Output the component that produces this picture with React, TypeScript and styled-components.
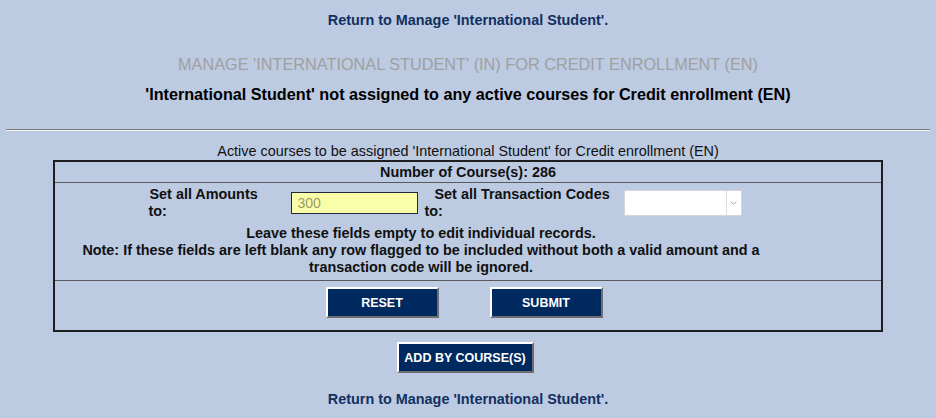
import React from 'react';
import styled, { createGlobalStyle } from 'styled-components';

const GlobalStyle = createGlobalStyle`
  body {
    margin: 0;
    background-color: #bccae2;
    font-family: "Liberation Sans", Arial, sans-serif;
  }
`;

const App: React.FC = () => {
  return (
    <>
      <GlobalStyle />
      <Page>
        <ReturnLink href="#">Return to Manage 'International Student'.</ReturnLink>
        <Title>MANAGE 'INTERNATIONAL STUDENT' (IN) FOR CREDIT ENROLLMENT (EN)</Title>
        <Message>'International Student' not assigned to any active courses for Credit enrollment (EN)</Message>
        <Divider />
        <Caption>Active courses to be assigned 'International Student' for Credit enrollment (EN)</Caption>
        <Panel>
          <CountRow>Number of Course(s): 286</CountRow>
          <SettingsRow>
            <FieldGrid>
              <FieldLabel width={112} indent={1}>Set all Amounts to:</FieldLabel>
              <AmountInput defaultValue="300" />
              <FieldLabel width={190} indent={10}>Set all Transaction Codes to:</FieldLabel>
              <SelectBox>
                <CodeSelect defaultValue="">
                  <option value=""></option>
                </CodeSelect>
                <SelectArrow>
                  <svg width="7" height="4" viewBox="0 0 7 4">
                    <path d="M0.5 0.5 L3.5 3.2 L6.5 0.5" fill="none" stroke="#a8a8a8" strokeWidth="1" />
                  </svg>
                </SelectArrow>
              </SelectBox>
            </FieldGrid>
            <Notes>
              Leave these fields empty to edit individual records.
              <br />
              Note: If these fields are left blank any row flagged to be included without both a valid amount and a
              <br />
              transaction code will be ignored.
            </Notes>
          </SettingsRow>
          <ActionRow>
            <NavyButton type="reset" width={113}>RESET</NavyButton>
            <NavyButton type="submit" width={113}>SUBMIT</NavyButton>
          </ActionRow>
        </Panel>
        <BottomActions>
          <NavyButton type="button" width={137}>ADD BY COURSE(S)</NavyButton>
        </BottomActions>
        <ReturnLink href="#" style={{ marginTop: 18 }}>Return to Manage 'International Student'.</ReturnLink>
      </Page>
    </>
  );
};

// Styled components
const Page = styled.div`
  padding: 12px 6px 0;
  display: flex;
  flex-direction: column;
  text-align: center;
`;

const ReturnLink = styled.a`
  display: block;
  align-self: center;
  font-size: 14.4px;
  font-weight: bold;
  line-height: 16px;
  color: #12305f;
  text-decoration: none;
`;

const Title = styled.h2`
  margin: 26px 0 0;
  font-size: 16.3px;
  font-weight: normal;
  line-height: 20px;
  color: #a0a0a0;
`;

const Message = styled.h3`
  margin: 11px 0 0;
  font-size: 16.2px;
  font-weight: bold;
  line-height: 18px;
  color: #000;
`;

const Divider = styled.hr`
  margin: 26px 0 0;
  height: 0;
  border: 0;
  border-top: 1px solid #7b7b7b;
  border-bottom: 1px solid #f4f4f4;
`;

const Caption = styled.div`
  margin-top: 12px;
  font-size: 14.4px;
  line-height: 17px;
  color: #111;
`;

const Panel = styled.div`
  box-sizing: border-box;
  width: 830px;
  margin: 0 auto;
  border: 2px solid #1e1e1e;
  color: #111;
  font-size: 14.4px;
  font-weight: bold;
`;

const CountRow = styled.div`
  height: 20px;
  line-height: 20px;
  border-bottom: 1px solid #5a5a5a;
`;

const SettingsRow = styled.div`
  padding: 3px 0 4px;
  border-bottom: 1px solid #5a5a5a;
`;

const FieldGrid = styled.div`
  display: grid;
  grid-template-columns: 142px 134px 199px 158px;
  justify-content: center;
  align-items: center;
  padding-right: 6px;
  text-align: left;
`;

const FieldLabel = styled.div<{ width: number; indent: number }>`
  width: ${p => p.width}px;
  text-indent: ${p => p.indent}px;
  line-height: 17px;
`;

const AmountInput = styled.input`
  box-sizing: border-box;
  width: 127px;
  height: 22px;
  padding: 0 6px;
  border: 1px solid #23283f;
  background: #f9ffa8;
  color: #9c9a6a;
  font-family: "Liberation Sans", Arial, sans-serif;
  font-size: 14px;
  outline: none;
`;

const SelectBox = styled.div`
  position: relative;
  box-sizing: border-box;
  width: 118px;
  height: 26px;
  border: 1px solid #d6d6d6;
  background: #fff;
`;

const CodeSelect = styled.select`
  appearance: none;
  width: 100%;
  height: 100%;
  border: 0;
  background: transparent;
  outline: none;
`;

const SelectArrow = styled.span`
  position: absolute;
  top: 0;
  right: 0;
  bottom: 0;
  width: 14px;
  border-left: 1px solid #dcdcdc;
  display: flex;
  align-items: center;
  justify-content: center;
  pointer-events: none;
`;

const Notes = styled.div`
  margin-top: 5px;
  padding-right: 94px;
  line-height: 17px;
`;

const ActionRow = styled.div`
  display: flex;
  justify-content: center;
  gap: 51px;
  padding: 6px 8px 12px 0;
`;

const NavyButton = styled.button<{ width: number }>`
  box-sizing: border-box;
  width: ${p => p.width}px;
  height: 31px;
  padding: 0;
  background: #002a5f;
  color: #fff;
  font-family: "Liberation Sans", Arial, sans-serif;
  font-size: 12.5px;
  font-weight: bold;
  border: 2px solid;
  border-color: #ffffff #6e6e6e #6e6e6e #ffffff;
  cursor: pointer;
`;

const BottomActions = styled.div`
  margin-top: 10px;
  padding-right: 6px;
  display: flex;
  justify-content: center;
`;

export default App;
